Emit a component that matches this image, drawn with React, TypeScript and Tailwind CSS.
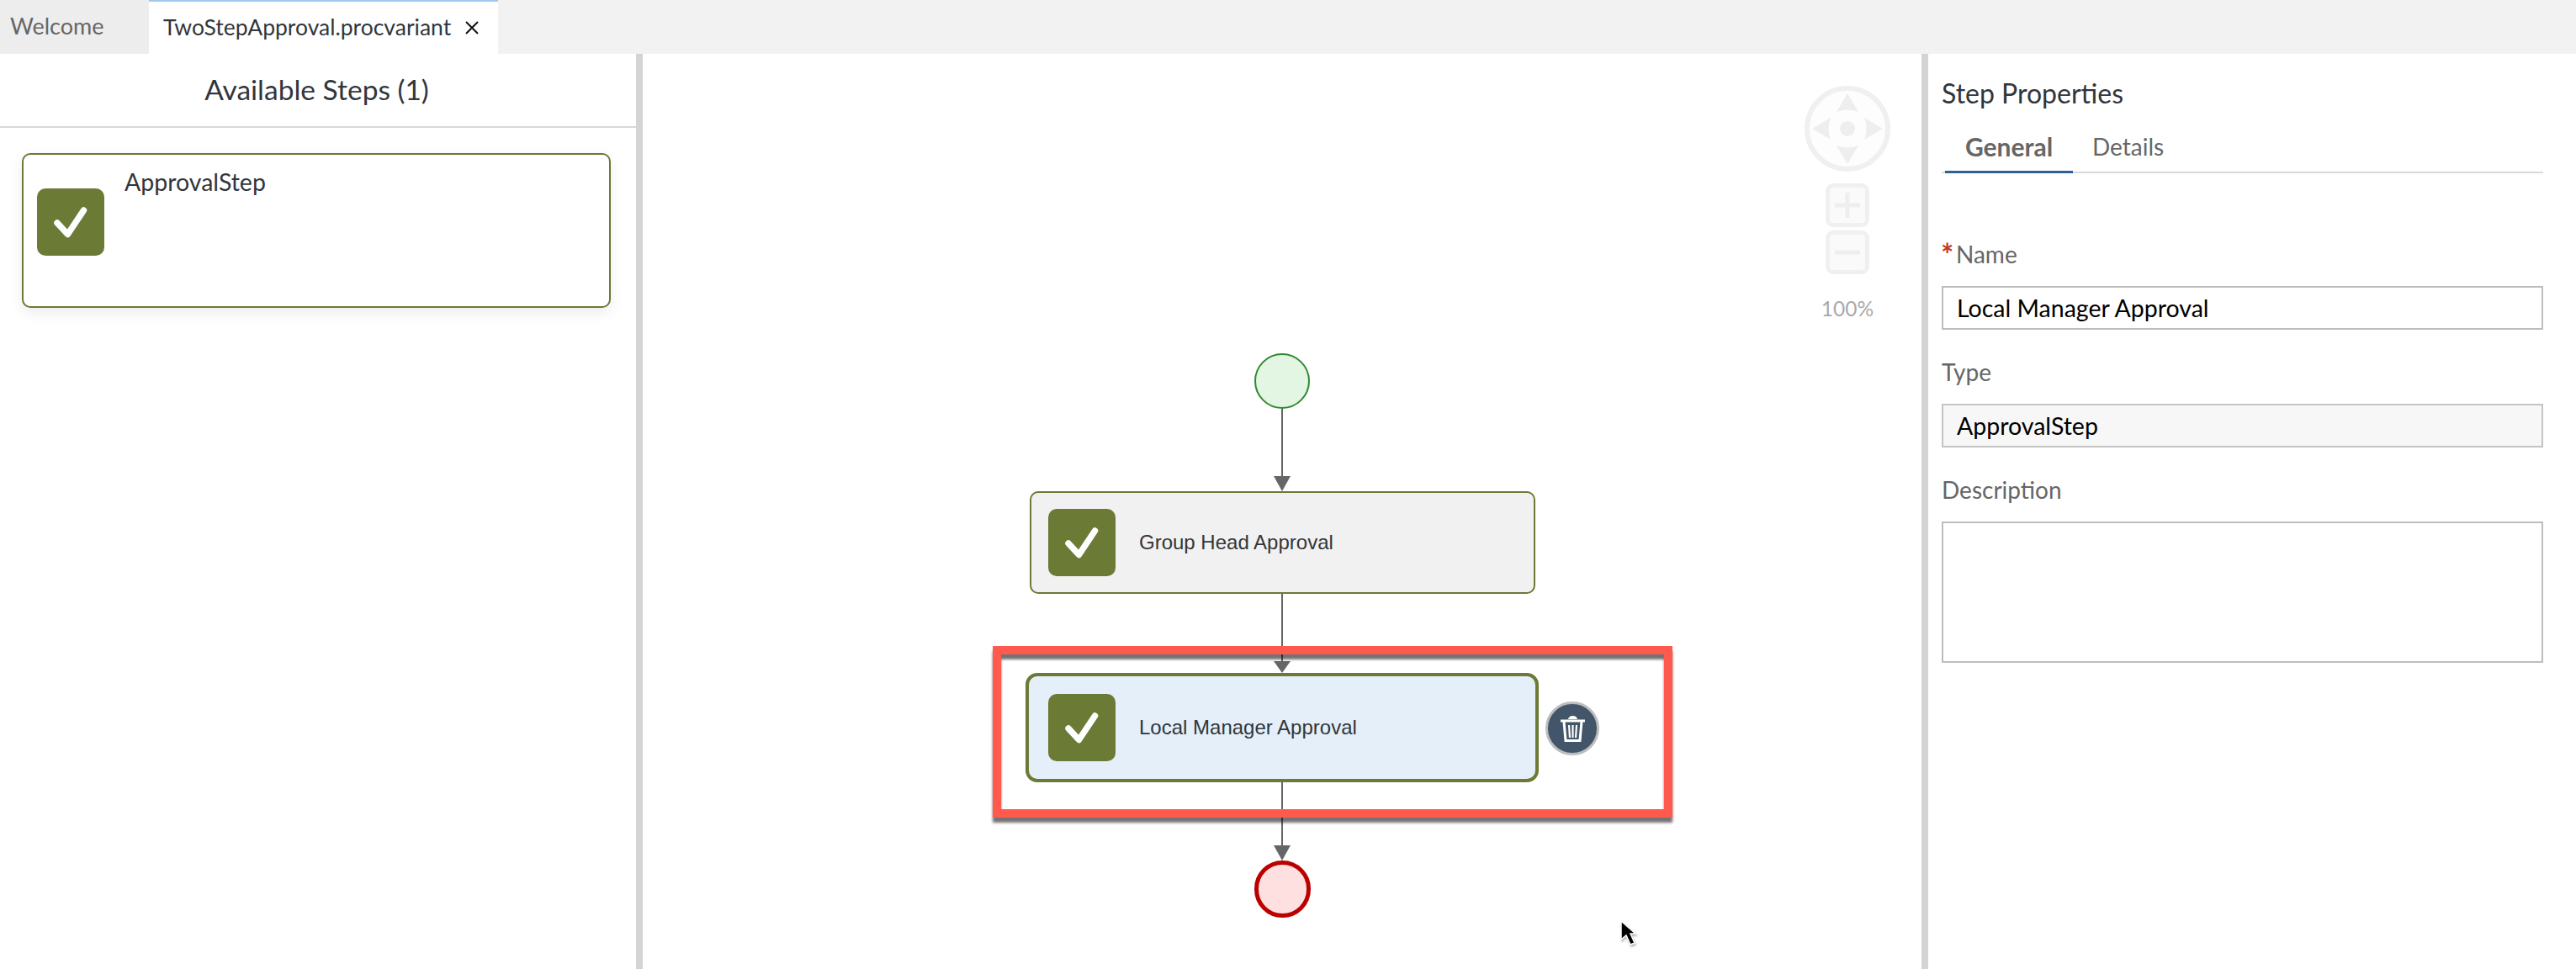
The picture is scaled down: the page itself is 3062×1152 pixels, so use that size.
import React from 'react';

const sans = 'font-["Lato","Noto_Sans",sans-serif]';

const StepIcon = () => (
  <div className="w-20 h-20 shrink-0 rounded-[10px] bg-[#6b7a35] flex items-center justify-center">
    <svg width="80" height="80" viewBox="0 0 80 80">
      <path d="M24 41 L36.5 54.5 L55.5 26" fill="none" stroke="#fff" strokeWidth="7.5" strokeLinecap="round" strokeLinejoin="round" />
    </svg>
  </div>
);

// Zoom and pan controls, top right of the canvas
const NavControl = () => (
  <div className="absolute left-[1380px] top-[37px] w-[104px] flex flex-col items-center">
    <svg width="104" height="104" viewBox="0 0 104 104">
      <circle cx="52" cy="52" r="48" fill="#fdfdfd" stroke="#f0f0f0" strokeWidth="6" />
      <path d="M52 10 L65 32 Q52 27 39 32 Z" fill="#eeeeee" />
      <path d="M52 94 L65 72 Q52 77 39 72 Z" fill="#eeeeee" />
      <path d="M10 52 L32 39 Q27 52 32 65 Z" fill="#eeeeee" />
      <path d="M94 52 L72 39 Q77 52 72 65 Z" fill="#eeeeee" />
      <circle cx="52" cy="52" r="9" fill="#eeeeee" />
    </svg>
    <div className="mt-[13px] w-[52px] h-[52px] rounded-[9px] border-[5px] border-[#f0f0f0] bg-[#fafafa] flex items-center justify-center">
      <svg width="30" height="30" viewBox="0 0 30 30">
        <path d="M0 15 H30 M15 0 V30" stroke="#eeeeee" strokeWidth="5" />
      </svg>
    </div>
    <div className="mt-[4px] w-[52px] h-[52px] rounded-[9px] border-[5px] border-[#f0f0f0] bg-[#fafafa] flex items-center justify-center">
      <svg width="30" height="30" viewBox="0 0 30 30">
        <path d="M0 15 H30" stroke="#eeeeee" strokeWidth="5" />
      </svg>
    </div>
    <div className={`mt-[23px] text-[24.5px] leading-[36px] text-[#a9a9a9] ${sans}`}>100%</div>
  </div>
);

const Connectors = () => (
  <svg className="absolute inset-0" width="1520" height="1088" viewBox="0 0 1520 1088">
    <g fill="#666666" stroke="#666666" strokeWidth="2">
      <path d="M760 422 V510" />
      <path d="M750 502 H770 L760 520 Z" stroke="none" />
      <path d="M760 642 V730" />
      <path d="M750 722 H770 L760 736 Z" stroke="none" />
      <path d="M760 866 V950" />
      <path d="M750 941 H770 L760 959 Z" stroke="none" />
    </g>
  </svg>
);

export default function App() {
  return (
    <div className="w-[3062px] h-[1152px] overflow-hidden bg-white flex flex-col font-['Liberation_Sans',sans-serif]">
      {/* Editor tabs */}
      <div className={`h-16 shrink-0 bg-[#f2f2f2] flex ${sans}`}>
        <div className="w-[177px] bg-[#ededed] pl-3 pb-[2px] flex items-center text-[27px] text-[#666666]">Welcome</div>
        <div className="w-[415px] bg-white border-t-2 border-[#9ec8ec] pl-[17px] flex items-center text-[26.5px] text-[#32363a]">
          <span>TwoStepApproval.procvariant</span>
          <svg className="ml-[17px]" width="16" height="16" viewBox="0 0 16 16">
            <path d="M1 1 L15 15 M15 1 L1 15" stroke="#111" strokeWidth="2" />
          </svg>
        </div>
      </div>

      <div className="flex-1 flex min-h-0">
        {/* Available steps */}
        <div className="w-[764px] shrink-0 border-r-8 border-[#d4d4d4]">
          <div className={`h-[88px] border-b-2 border-[#d9d9d9] flex items-center justify-center pb-[2px] pr-[3px] text-[33.5px] text-[#32363a] ${sans}`}>
            Available Steps (1)
          </div>
          <div className="ml-[26px] mt-[30px] w-[700px] h-[184px] rounded-[10px] border-2 border-[#6b7a35] bg-white shadow-[0_6px_16px_rgba(0,0,0,0.08)] pl-[16px] pt-[18px] flex">
            <div className="mt-[22px]">
              <StepIcon />
            </div>
            <div className={`ml-6 -mt-[6px] text-[28.5px] leading-[40px] text-[#32363a] ${sans}`}>ApprovalStep</div>
          </div>
        </div>

        {/* Process canvas */}
        <div className="w-[1528px] shrink-0 border-r-8 border-[#d4d4d4] relative">
          <Connectors />
          <NavControl />

          <div className="absolute left-[727px] top-[356px] w-[66px] h-[66px] rounded-full border-2 border-[#2f8a2f] bg-[#e3f5e3]" />

          <div className="absolute left-[460px] top-[520px] w-[601px] h-[122px] rounded-[10px] border-2 border-[#6b7a35] bg-[#f1f1f1] flex items-center pl-5">
            <StepIcon />
            <span className="ml-[28px] text-[24px] text-[#32363a]">Group Head Approval</span>
          </div>

          <div className="absolute left-[455px] top-[736px] w-[610px] h-[130px] rounded-[14px] border-4 border-[#6b7a35] bg-[#e4eff9] flex items-center pl-[23px]">
            <StepIcon />
            <span className="ml-[28px] text-[24px] text-[#32363a]">Local Manager Approval</span>
          </div>

          <div className="absolute left-[1073px] top-[770px] w-[64px] h-[64px] rounded-full border-[3px] border-[#bdbdbd] bg-[#435569] flex items-center justify-center">
            <svg width="29" height="32" viewBox="0 0 29 32">
              <path d="M0 5.5 H29 V8.5 H0 Z M9 5 Q10 1 14.5 1 Q19 1 20 5 Z" fill="#fff" />
              <path d="M4 8 L6 30.5 H23 L25 8" fill="none" stroke="#fff" strokeWidth="3" />
              <path d="M10 12 L11 27 M14.5 12 V27 M19 12 L18 27" fill="none" stroke="#fff" strokeWidth="2.2" />
            </svg>
          </div>

          <div className="absolute left-[727px] top-[959px] w-[67px] h-[68px] rounded-full border-[5px] border-[#bb0000] bg-[#ffe0e0]" />

          {/* Red highlight drawn over the diagram */}
          <div className="absolute left-[416px] top-[704px] w-[808px] h-[204px] border-[10px] border-[#ff5a4d] shadow-[0_6px_3px_rgba(0,0,0,0.55),inset_0_6px_3px_rgba(0,0,0,0.55)] pointer-events-none" />

          {/* Mouse pointer */}
          <svg className="absolute left-[1161px] top-[1029px] drop-shadow-[1px_2px_1px_rgba(0,0,0,0.3)]" width="24" height="34" viewBox="0 0 24 34">
            <path d="M2 2 V24 L8 19 L13 30 L18 28 L13 17 L19 17 Z" fill="#000" stroke="#fff" strokeWidth="1.5" />
          </svg>
        </div>

        {/* Step properties */}
        <div className={`flex-1 pl-4 pr-[39px] pt-[27px] ${sans}`}>
          <div className="text-[32px] leading-10 text-[#32363a]">Step Properties</div>
          <div className="mt-[23px] h-[52px] border-b-2 border-[#d9d9d9] flex pl-1">
            <div className="w-[152px] h-[52px] border-b-[3px] border-[#2f6190] text-center text-[30px] leading-10 font-bold text-[#666666]">General</div>
            <div className="ml-[23px] text-[28px] leading-10 text-[#666666]">Details</div>
          </div>

          <div className="mt-[76px] flex text-[28px] leading-10 text-[#666666]">
            <span className="-ml-px w-[18px] text-[36px] text-[#c0392b] font-bold">*</span>
            <span>Name</span>
          </div>
          <input readOnly value="Local Manager Approval" className="mt-[18px] block w-full h-[52px] border-2 border-[#bdbdbd] bg-white px-4 text-[28.5px] text-black" />

          <div className="mt-[31px] -translate-y-px text-[28px] leading-10 text-[#666666]">Type</div>
          <input readOnly value="ApprovalStep" className="mt-[17px] block w-full h-[52px] border-2 border-[#c4c4c4] bg-[#f7f7f7] px-4 text-[28.5px] text-black" />

          <div className="mt-[30px] text-[28px] leading-10 text-[#666666]">Description</div>
          <textarea readOnly className="mt-[18px] block w-full h-[168px] border-2 border-[#bdbdbd] bg-white resize-none" />
        </div>
      </div>
    </div>
  );
}
